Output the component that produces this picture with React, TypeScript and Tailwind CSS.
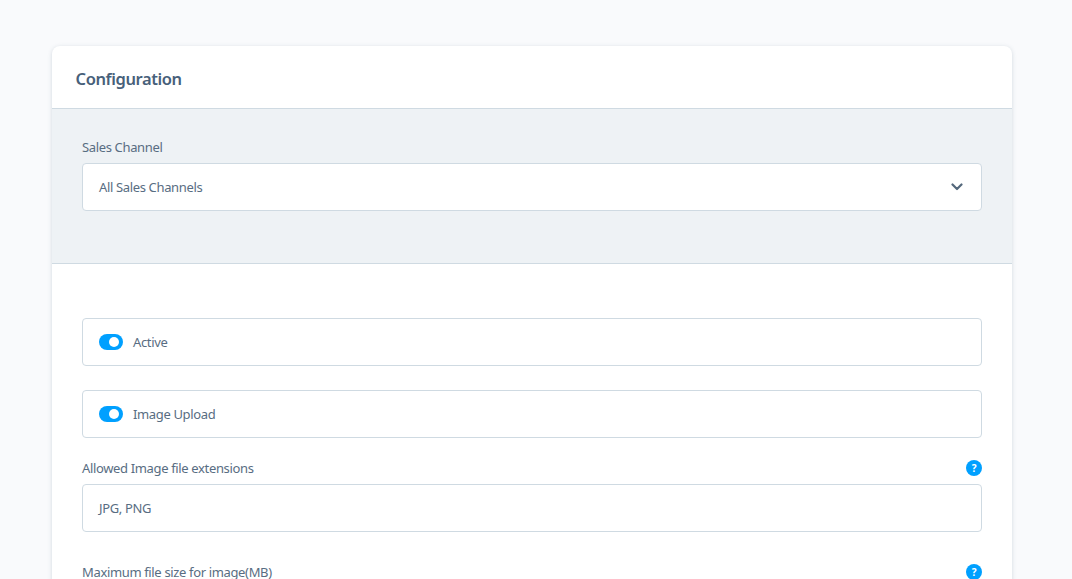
import React from "react";

function Toggle() {
  return (
    <span className="flex h-4 w-6 shrink-0 items-center justify-end rounded-full bg-[#00a0ff] pr-[4px]">
      <span className="h-[10px] w-[10px] rounded-full bg-white" />
    </span>
  );
}

function ToggleRow({ label }: { label: string }) {
  return (
    <div className="flex h-12 items-center gap-[10px] rounded-[4px] border border-[#cfdae2] bg-white pl-4">
      <Toggle />
      <span className="pt-px">{label}</span>
    </div>
  );
}

function Help() {
  return (
    <span className="flex h-4 w-4 items-center justify-center rounded-full bg-[#00a0ff] text-[10px] font-bold leading-none text-white">
      ?
    </span>
  );
}

function FieldLabel({ label, help }: { label: string; help?: boolean }) {
  return (
    <div className="flex h-4 items-center justify-between leading-4">
      <span>{label}</span>
      {help && <Help />}
    </div>
  );
}

export default function App() {
  return (
    <div className="h-[579px] overflow-hidden bg-[#f9fafc] px-[52px] pt-[46px] font-['Noto_Sans',sans-serif] text-[13px] tracking-[-0.35px] text-[#586d82]">
      <div className="w-[960px] rounded-[8px] bg-white pb-16 shadow-[0_1px_4px_rgba(120,138,155,0.3)]">
        <div className="flex h-[63px] items-center border-b border-[#cfdae2] pl-[23.500px] pr-6 pt-[3px]">
          <h2 className="text-[16.500px] font-semibold leading-6 tracking-[-0.4px] text-[#47607a]">Configuration</h2>
        </div>
        <div className="h-[155px] border-b border-[#cfdae2] bg-[#eef2f5] px-[30px] pt-[30px]">
          <FieldLabel label="Sales Channel" />
          <div className="mt-2 flex h-12 items-center justify-between rounded-[4px] border border-[#cfdae2] bg-white pl-4 pr-[18px]">
            <span className="pt-px">All Sales Channels</span>
            <svg width="12" height="8" viewBox="0 0 12 8" fill="none">
              <path d="M1.500 1.500 6 6l4.500-4.500" stroke="#54687c" strokeWidth="2.200" strokeLinecap="round" strokeLinejoin="round" />
            </svg>
          </div>
        </div>
        <div className="flex flex-col px-[30px] pt-[54px]">
          <ToggleRow label="Active" />
          <div className="mt-6">
            <ToggleRow label="Image Upload" />
          </div>
          <div className="mt-[22px]">
            <FieldLabel label="Allowed Image file extensions" help />
          </div>
          <div className="mt-2 flex h-12 items-center rounded-[4px] border border-[#cfdae2] bg-white pl-4">
            <span className="pt-px">JPG, PNG</span>
          </div>
          <div className="mt-8">
            <FieldLabel label="Maximum file size for image(MB)" help />
          </div>
        </div>
      </div>
    </div>
  );
}
